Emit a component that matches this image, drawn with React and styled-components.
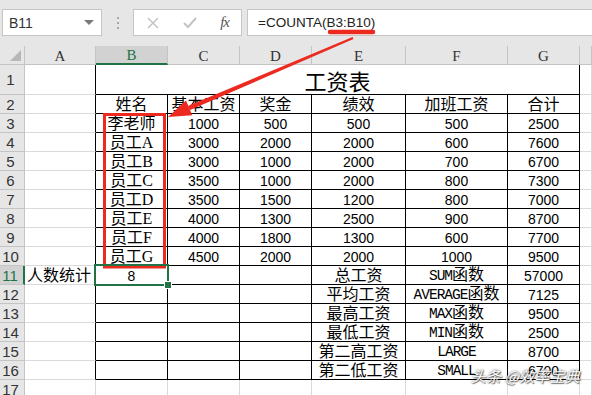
import React from "react";
import styled, { createGlobalStyle, css } from "styled-components";

const GlobalStyle = createGlobalStyle`
  html, body {
    margin: 0;
    padding: 0;
    background: #ffffff;
  }
  * {
    box-sizing: border-box;
  }
`;

const GRID = "#dadada";
const HEAD_LINE = "#c4c4c4";
const GREEN = "#217346";
const RED = "#ec2a1f";

const Page = styled.div`
  position: relative;
  width: 592px;
  height: 395px;
  overflow: hidden;
  background: #fff;
  font-family: "Noto Sans CJK SC", sans-serif;
`;

const Toolbar = styled.div`
  height: 46px;
  background: #e6e6e6;
  display: flex;
  align-items: flex-start;
  padding: 9px 0 0 2px;
`;

const NameBox = styled.div`
  width: 100px;
  height: 27px;
  background: #fff;
  border: 1px solid #c6c6c6;
  display: flex;
  align-items: center;
  justify-content: space-between;
  padding: 0 7px 0 6px;
  font-family: "Liberation Sans", sans-serif;
  font-size: 14px;
  color: #333;
`;

const DropArrow = styled.span`
  width: 0;
  height: 0;
  border-left: 5px solid transparent;
  border-right: 5px solid transparent;
  border-top: 5px solid #7a7a7a;
`;

const Grip = styled.div`
  width: 31px;
  height: 27px;
  display: flex;
  flex-direction: column;
  align-items: center;
  justify-content: center;
  gap: 3px;

  span {
    width: 2px;
    height: 2px;
    background: #a8a8a8;
  }
`;

const ButtonBox = styled.div`
  width: 109px;
  height: 27px;
  background: #fff;
  border: 1px solid #c6c6c6;
  display: flex;
  align-items: center;
  justify-content: space-between;
  padding: 0 12px 0 13px;
`;

const Fx = styled.span`
  font-family: "Liberation Serif", serif;
  font-style: italic;
  font-size: 15px;
  color: #555;
  letter-spacing: -1px;
`;

const FormulaBox = styled.div`
  flex: 1;
  margin-left: 5px;
  height: 27px;
  background: #fff;
  border: 1px solid #c6c6c6;
  border-right: none;
  display: flex;
  align-items: center;
  padding-left: 10px;
  font-family: "Liberation Sans", sans-serif;
  font-size: 13.5px;
  color: #222;
`;

const Sheet = styled.div`
  display: grid;
  grid-template-columns: 25px 71px 72px 72px 72px 94px 102px 72px 1fr;
  grid-template-rows: 19px 30px repeat(16, 19px);
`;

const Corner = styled.div`
  position: relative;
  background: #e6e6e6;
  border-right: 1px solid ${HEAD_LINE};
  border-bottom: 1px solid ${HEAD_LINE};

  &::after {
    content: "";
    position: absolute;
    right: 3px;
    bottom: 3px;
    width: 0;
    height: 0;
    border-left: 11px solid transparent;
    border-bottom: 11px solid #b7b7b7;
  }
`;

const ColHead = styled.div`
  background: ${(p) => (p.$selected ? "#d2d2d2" : "#e6e6e6")};
  border-right: 1px solid ${HEAD_LINE};
  border-bottom: ${(p) => (p.$selected ? `2px solid ${GREEN}` : `1px solid ${HEAD_LINE}`)};
  color: ${(p) => (p.$selected ? GREEN : "#333")};
  font-family: "Liberation Serif", serif;
  font-size: 15px;
  display: flex;
  align-items: center;
  justify-content: center;
  padding-top: 2px;
`;

const RowHead = styled.div`
  background: ${(p) => (p.$selected ? "#d2d2d2" : "#e6e6e6")};
  border-bottom: 1px solid ${HEAD_LINE};
  border-right: ${(p) => (p.$selected ? `2px solid ${GREEN}` : `1px solid ${HEAD_LINE}`)};
  color: ${(p) => (p.$selected ? GREEN : "#333")};
  font-family: "Liberation Sans", sans-serif;
  font-size: 15px;
  display: flex;
  align-items: center;
  justify-content: center;
  padding-right: 3px;
`;

const Cell = styled.div`
  position: relative;
  border-right: 1px solid ${(p) => (p.$boxed || p.$edge ? "#000" : GRID)};
  border-bottom: 1px solid ${(p) => (p.$boxed ? "#000" : GRID)};
  display: flex;
  align-items: center;
  justify-content: ${(p) => (p.$left ? "flex-start" : "center")};
  padding-left: ${(p) => (p.$left ? "2px" : "0")};
  padding-top: 1px;
  white-space: nowrap;
  color: #000;
  font-family: ${(p) =>
    p.$num
      ? `"Liberation Sans", sans-serif`
      : `"Liberation Serif", "Noto Sans CJK SC", serif`};
  font-size: ${(p) => (p.$num ? "14px" : "16px")};
  line-height: 1;

  ${(p) =>
    p.$active &&
    css`
      &::after {
        content: "";
        position: absolute;
        left: -2px;
        top: -2px;
        right: -2px;
        bottom: -2px;
        border: 2px solid ${GREEN};
        z-index: 2;
      }
      &::before {
        content: "";
        position: absolute;
        right: -5px;
        bottom: -5px;
        width: 6px;
        height: 6px;
        background: ${GREEN};
        border: 1px solid #fff;
        z-index: 3;
      }
    `}
`;

const TitleCell = styled.div`
  grid-column: 3 / 9;
  border-right: 1px solid #000;
  border-bottom: 1px solid #000;
  display: flex;
  align-items: flex-end;
  justify-content: center;
  padding-bottom: 1px;
  font-family: "Noto Sans CJK SC", sans-serif;
  font-size: 22px;
  line-height: 1.2;
  color: #000;
`;

const Lat = styled.span`
  font-family: "Liberation Mono", monospace;
  font-size: 14.5px;
  letter-spacing: -1px;
`;

const Overlay = styled.svg`
  position: absolute;
  left: 0;
  top: 0;
  pointer-events: none;
`;

const Watermark = styled.div`
  position: absolute;
  right: 12px;
  bottom: 9px;
  font-family: "Noto Sans CJK SC", sans-serif;
  font-size: 15px;
  font-style: italic;
  color: #ffffff;
  text-shadow: 0 0 2px rgba(0, 0, 0, 0.75), 1px 1px 1px rgba(0, 0, 0, 0.55);
  letter-spacing: 0.2px;
  white-space: nowrap;
`;

const COLS = ["A", "B", "C", "D", "E", "F", "G"];

const ROWS = [
  null,
  ["", "姓名", "基本工资", "奖金", "绩效", "加班工资", "合计"],
  ["", "李老师", "1000", "500", "500", "500", "2500"],
  ["", "员工A", "3000", "2000", "2000", "600", "7600"],
  ["", "员工B", "3000", "1000", "2000", "700", "6700"],
  ["", "员工C", "3500", "1000", "2000", "800", "7300"],
  ["", "员工D", "3500", "1500", "1200", "800", "7000"],
  ["", "员工E", "4000", "1300", "2500", "900", "8700"],
  ["", "员工F", "4000", "1800", "1300", "600", "7700"],
  ["", "员工G", "4500", "2000", "2000", "1000", "9500"],
  ["人数统计", "8", "", "", "总工资", ["SUM", "函数"], "57000"],
  ["", "", "", "", "平均工资", ["AVERAGE", "函数"], "7125"],
  ["", "", "", "", "最高工资", ["MAX", "函数"], "9500"],
  ["", "", "", "", "最低工资", ["MIN", "函数"], "2500"],
  ["", "", "", "", "第二高工资", ["LARGE", ""], "8700"],
  ["", "", "", "", "第二低工资", ["SMALL", ""], "6700"],
  ["", "", "", "", "", "", ""],
];

const isNum = (v) => typeof v === "string" && /^\d+$/.test(v);

const CellText = ({ value }) => {
  if (Array.isArray(value)) {
    return (
      <span>
        <Lat>{value[0]}</Lat>
        {value[1]}
      </span>
    );
  }
  return value;
};

const Arrow = () => {
  const tip = [168, 117];
  const start = [353, 38];
  const dx = tip[0] - start[0];
  const dy = tip[1] - start[1];
  const len = Math.hypot(dx, dy);
  const ux = dx / len;
  const uy = dy / len;
  const px = -uy;
  const py = ux;
  const headLen = 23;
  const headHalf = 8;
  const bx = tip[0] - ux * headLen;
  const by = tip[1] - uy * headLen;
  const w0 = 1.2;
  const w1 = 2.3;
  const shaft = [
    [start[0] + px * w0, start[1] + py * w0],
    [bx + px * w1, by + py * w1],
    [bx - px * w1, by - py * w1],
    [start[0] - px * w0, start[1] - py * w0],
  ];
  const head = [
    tip,
    [bx + px * headHalf, by + py * headHalf],
    [bx - px * headHalf, by - py * headHalf],
  ];
  const pts = (a) => a.map((p) => p.join(",")).join(" ");
  return (
    <>
      <polygon points={pts(shaft)} fill={RED} />
      <polygon points={pts(head)} fill={RED} />
    </>
  );
};

const App = () => {
  return (
    <Page>
      <GlobalStyle />
      <Toolbar>
        <NameBox>
          B11
          <DropArrow />
        </NameBox>
        <Grip>
          <span />
          <span />
          <span />
        </Grip>
        <ButtonBox>
          <svg width="12" height="12" viewBox="0 0 12 12">
            <path d="M1 1 L11 11 M11 1 L1 11" stroke="#c4c4c4" strokeWidth="1.5" />
          </svg>
          <svg width="14" height="12" viewBox="0 0 14 12">
            <path d="M1 6 L5 10 L13 1" stroke="#c4c4c4" strokeWidth="2" fill="none" />
          </svg>
          <Fx>fx</Fx>
        </ButtonBox>
        <FormulaBox>=COUNTA(B3:B10)</FormulaBox>
      </Toolbar>

      <Sheet>
        <Corner />
        {COLS.map((c) => (
          <ColHead key={c} $selected={c === "B"}>
            {c}
          </ColHead>
        ))}
        <ColHead />

        {ROWS.map((row, i) => {
          const n = i + 1;
          const inTable = n <= 16;
          if (row === null) {
            return (
              <React.Fragment key={n}>
                <RowHead>{n}</RowHead>
                <Cell $edge />
                <TitleCell>工资表</TitleCell>
                <Cell />
              </React.Fragment>
            );
          }
          return (
            <React.Fragment key={n}>
              <RowHead $selected={n === 11}>{n}</RowHead>
              {row.map((v, ci) => (
                <Cell
                  key={ci}
                  $edge={ci === 0 && inTable}
                  $boxed={ci > 0 && inTable}
                  $left={ci === 0}
                  $num={isNum(v)}
                  $active={n === 11 && ci === 1}
                >
                  <CellText value={v} />
                </Cell>
              ))}
              <Cell />
            </React.Fragment>
          );
        })}
      </Sheet>

      <Overlay width="592" height="395" viewBox="0 0 592 395">
        <rect x="104.5" y="114.5" width="60" height="152.5" fill="none" stroke={RED} strokeWidth="3" />
        <line x1="330" y1="32" x2="373" y2="32" stroke={RED} strokeWidth="4.5" strokeLinecap="round" />
        <Arrow />
      </Overlay>

      <Watermark>头条 @效率宝典</Watermark>
    </Page>
  );
};

export default App;
